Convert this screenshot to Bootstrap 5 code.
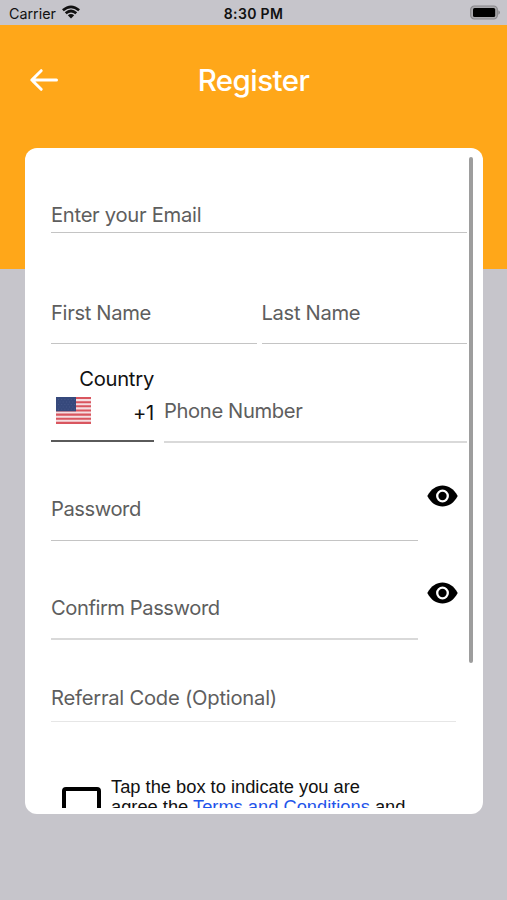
<!DOCTYPE html>
<html lang="en">
<head>
<meta charset="utf-8">
<meta name="viewport" content="width=device-width, initial-scale=1">
<title>Register</title>
<link href="https://cdn.jsdelivr.net/npm/bootstrap@5.3.0/dist/css/bootstrap.min.css" rel="stylesheet">
<style>
  body { width: 507px; height: 900px; background: linear-gradient(#ffa719 269px, #c6c5cb 269px); font-family: Inter, sans-serif; color: #111; }
  .status { height: 25px; padding: 2px 7px 0 9px; background: #c6c5cb; font-size: 14.3px; line-height: 24px; }
  .status .clock { font-size: 14px; letter-spacing: .35px; }
  .wifi { margin: -3px 0 0 6px; }
  .battery { margin-top: -3px; }
  .topbar { height: 123px; padding: 0 29px 13px; }
  .topbar h1 { font-size: 29.5px; letter-spacing: -.55px; font-weight: 500; line-height: 36px; padding-right: 30px; }
  .panel { width: 457.5px; height: 666px; margin-left: 25px; padding: 0 9.5px 6px 26px; border-radius: 12px; }
  .scroller { width: 416px; }
  .track { width: 4px; height: 506px; margin-top: 9px; border-radius: 2px; background: #9d9d9d; }
  .field { font-size: 20.2px; letter-spacing: -.33px; line-height: 24px; color: #5e5e5e; border-bottom: 1px solid #c4c4c4; padding-bottom: 18px; white-space: nowrap; }
  .thick { border-bottom: 2px solid #d9d9d9; }
  .f-email { margin-top: 55px; padding-bottom: 5px; letter-spacing: -.28px; }
  .names { margin-top: 68px; gap: 5px; }
  .names .field { flex: 1 1 0; }
  .phone-row { margin-top: 23px; gap: 10px; }
  .phone-row .thick { letter-spacing: -.37px; }
  .country { width: 103px; color: #111; border-bottom: 2px solid #5a5a5a; padding-bottom: 16px; margin-bottom: 1px; letter-spacing: -.25px; }
  .dial { height: 33px; padding-left: 5px; padding-top: 6px; }
  .dial span { padding-top: 4px; }
  .short { width: 367px; letter-spacing: -.45px; }
  .pw1 { margin-top: 54px; }
  .pw2 { margin-top: 55px; }
  .pw1 .field { padding-bottom: 19px; }
  .eye { margin: -12px 9.5px 0 0; }
  .pw2 .eye { margin-top: -14px; }
  .ref { margin-top: 46px; width: 405px; padding-bottom: 10.5px; border-color: #e6e6e6; letter-spacing: -.23px; }
  .terms { margin-top: 55.5px; padding-left: 11px; font: 18.3px/20px "Liberation Sans", sans-serif; color: #111; }
  .tick { width: 39px; height: 39px; margin: 9.5px 10px 0 0; border: 4px solid #000; border-radius: 4px; }
  .terms a { color: #1f55ea; text-decoration: none; }
</style>
</head>
<body class="overflow-hidden">
<div class="status d-flex align-items-center justify-content-between position-relative">
  <div class="d-flex align-items-center">
    <span>Carrier</span>
    <svg class="wifi" width="18" height="14" viewBox="0 0 18 14" fill="none" stroke="#111" stroke-width="2.7"><path d="M.9 5.3Q9-1.600 17.100 5.300M3.700 8.300Q9 3.700 14.300 8.300"/><path d="M9 13.500 5.800 10.300Q9 7.800 12.200 10.300Z" fill="#111" stroke="none"/></svg>
  </div>
  <span class="clock fw-semibold position-absolute start-50 translate-middle-x">8:30 PM</span>
  <svg class="battery" width="30" height="15" viewBox="0 0 30 15"><rect x=".7" y="1" width="26.6" height="13" rx="3.6" fill="#aaa9ad" stroke="#88878b" stroke-width="1.2"/><rect x="3" y="3" width="22.2" height="9" rx="1.6"/><path d="M28.3 5.2Q30 6 30 7.5T28.3 9.8Z" fill="#88878b"/></svg>
</div>
<header class="topbar d-flex align-items-center text-white">
  <svg width="30" height="24" viewBox="0 0 30 24" fill="none" stroke="#fff" stroke-width="3" stroke-linecap="round" stroke-linejoin="round"><path d="M27.5 12H3M12.2 2.7 2.8 12l9.400 9.300"/></svg>
  <h1 class="m-0 flex-grow-1 text-center">Register</h1>
</header>
<main class="panel bg-white d-flex justify-content-between overflow-hidden">
  <div class="scroller h-100 overflow-hidden">
    <div class="field f-email">Enter your Email</div>
    <div class="names d-flex">
      <div class="field">First Name</div>
      <div class="field">Last Name</div>
    </div>
    <div class="phone-row d-flex align-items-end">
      <div class="field country">
        <div class="text-end">Country</div>
        <div class="dial d-flex justify-content-between">
          <svg width="35" height="27" viewBox="0 0 35 27"><path fill="#f5dfe2" d="M0 0h35v27H0z"/><path stroke="#d9565f" stroke-width="2.1" d="M0 1h35M0 5.2h35M0 9.3h35M0 13.5h35M0 17.6h35M0 21.8h35M0 25.9h35"/><path fill="#36497c" d="M0 0h20v14.3H0z"/><path stroke="#4d5f8f" stroke-width=".7" stroke-dasharray="1 2.2" d="M2 2.5h17M3.5 5h15M2 7.5h17M3.5 10h15M2 12.2h17"/></svg>
          <span>+1</span>
        </div>
      </div>
      <div class="field thick flex-fill">Phone Number</div>
    </div>
    <div class="pw1 d-flex justify-content-between align-items-start">
      <div class="field short">Password</div>
      <svg class="eye" width="31" height="22" viewBox="0 0 31 22"><path d="M.3 11C4 4 9.500 .5 15.500 .5S27 4 30.700 11C27 18 21.500 21.500 15.500 21.500S4 18 .3 11Z"/><circle cx="15.500" cy="11" r="5.300" stroke="#fff" stroke-width="2.300"/></svg>
    </div>
    <div class="pw2 d-flex justify-content-between align-items-start">
      <div class="field short thick">Confirm Password</div>
      <svg class="eye" width="31" height="22" viewBox="0 0 31 22"><path d="M.3 11C4 4 9.500 .5 15.500 .5S27 4 30.700 11C27 18 21.500 21.500 15.500 21.500S4 18 .3 11Z"/><circle cx="15.500" cy="11" r="5.300" stroke="#fff" stroke-width="2.300"/></svg>
    </div>
    <div class="field ref">Referral Code (Optional)</div>
    <div class="terms d-flex">
      <div class="tick flex-shrink-0"></div>
      <div>Tap the box to indicate you are<br>agree the <a href="#">Terms and Conditions</a> and</div>
    </div>
  </div>
  <div class="track"></div>
</main>
<script src="https://cdn.jsdelivr.net/npm/bootstrap@5.3.0/dist/js/bootstrap.bundle.min.js"></script>
</body>
</html>
